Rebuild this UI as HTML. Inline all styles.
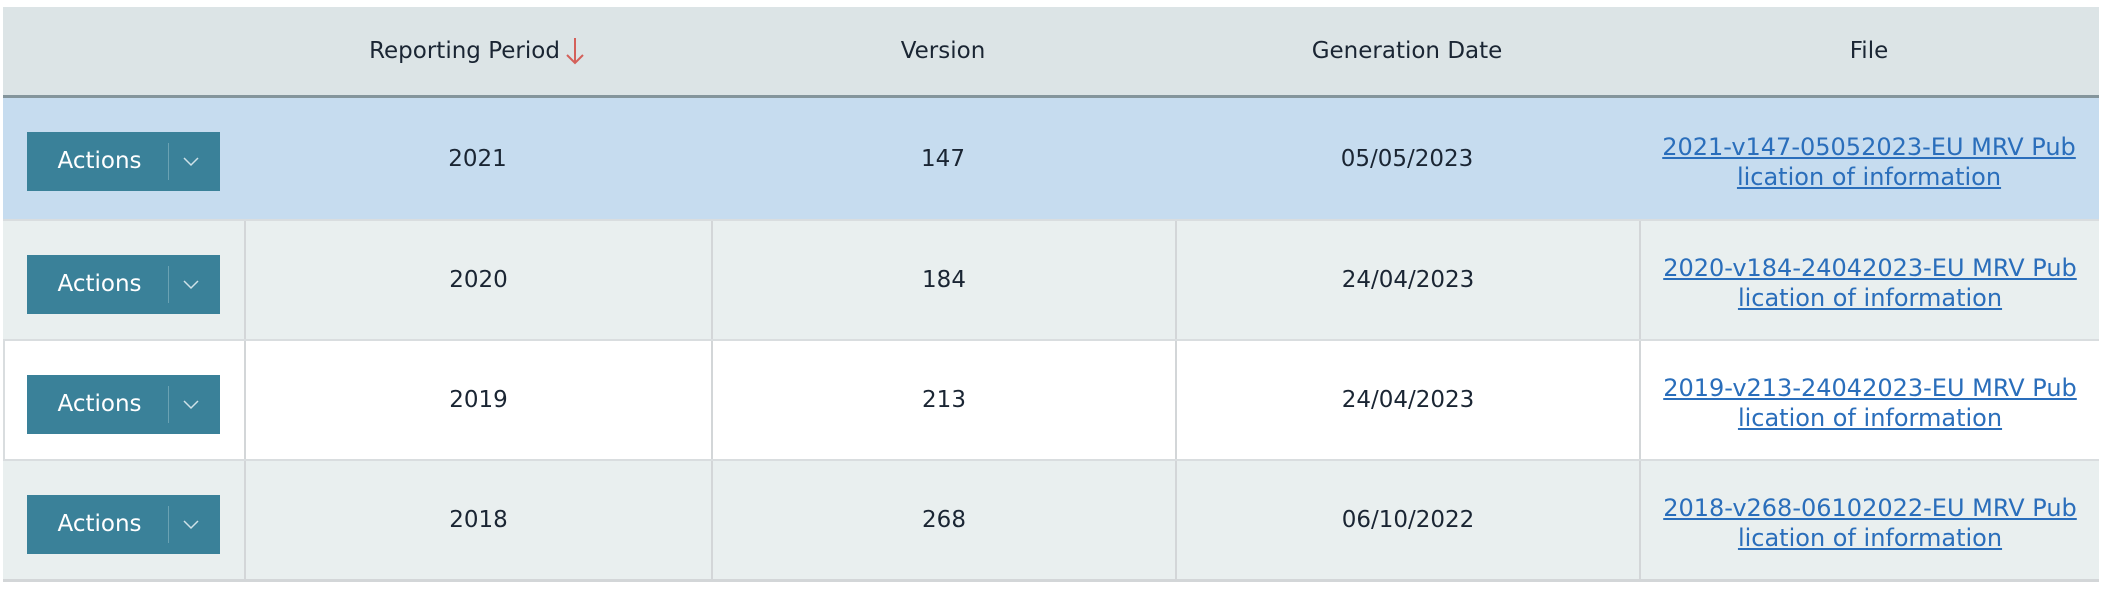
<!DOCTYPE html>
<html><head><style>
body{margin:0;width:2104px;height:596px;background:#fff;font-family:"DejaVu Sans",Verdana,sans-serif;overflow:hidden;position:relative}
.t{position:absolute;left:3px;top:7px;width:2096px}
.hd{height:88px;background:#dce4e6;border-bottom:3px solid #84959c;position:relative;color:#1a2533;font-size:23px}
.row{height:118px;position:relative;border-bottom:2px solid #d9dddf;color:#1a2533;font-size:23px}
.c{position:absolute;top:0;bottom:0;display:flex;align-items:center;justify-content:center;text-align:center}
.b{border-left:2px solid #d3d6d8}
.btn{position:absolute;left:24px;top:34px;width:193px;height:59px;background:#3a8199;color:#fff;font-size:23px}
.btn span{position:absolute;left:0;width:145px;top:0;line-height:59px;text-align:center}
.btn i{position:absolute;left:141px;top:11px;height:37px;border-left:1px solid #6aa2b3}
.btn svg{position:absolute;left:155px;top:24px}
a{color:#2a6ebb;text-decoration:underline;line-height:30px;font-size:24px;padding-top:6px;white-space:nowrap}
</style></head><body>
<div class="t">
<div class="hd">
<div class="c" style="left:241px;width:467px">Reporting Period<svg width="22" height="32" viewBox="0 0 22 32" style="margin-left:4px"><path d="M11 3V28M3 20L11 28L19 20" stroke="#d4605a" stroke-width="2" fill="none"/></svg></div>
<div class="c" style="left:708px;width:464px">Version</div>
<div class="c" style="left:1172px;width:464px">Generation Date</div>
<div class="c" style="left:1636px;width:460px">File</div>
</div>
<div class="row" style="background:#c6dcef;height:121px">
<div class="btn"><span>Actions</span><i></i><svg width="18" height="12"><path d="M2 2L9 9L16 2" stroke="#cfe2e8" stroke-width="1.5" fill="none"/></svg></div>
<div class="c" style="left:241px;width:467px">2021</div>
<div class="c" style="left:708px;width:464px">147</div>
<div class="c" style="left:1172px;width:464px">05/05/2023</div>
<div class="c" style="left:1636px;width:460px"><a>2021-v147-05052023-EU MRV Pub<br>lication of information</a></div>
</div>
<div class="row" style="background:#e9efef">
<div class="btn"><span>Actions</span><i></i><svg width="18" height="12"><path d="M2 2L9 9L16 2" stroke="#cfe2e8" stroke-width="1.5" fill="none"/></svg></div>
<div class="c b" style="left:241px;width:465px">2020</div>
<div class="c b" style="left:708px;width:462px">184</div>
<div class="c b" style="left:1172px;width:462px">24/04/2023</div>
<div class="c b" style="left:1636px;width:458px"><a>2020-v184-24042023-EU MRV Pub<br>lication of information</a></div>
</div>
<div class="row" style="background:#fff;border-left:2px solid #d9dddf">
<div class="btn" style="left:22px"><span>Actions</span><i></i><svg width="18" height="12"><path d="M2 2L9 9L16 2" stroke="#cfe2e8" stroke-width="1.5" fill="none"/></svg></div>
<div class="c b" style="left:239px;width:465px">2019</div>
<div class="c b" style="left:706px;width:462px">213</div>
<div class="c b" style="left:1170px;width:462px">24/04/2023</div>
<div class="c b" style="left:1634px;width:458px"><a>2019-v213-24042023-EU MRV Pub<br>lication of information</a></div>
</div>
<div class="row" style="background:#e9efef;border-bottom:3px solid #d3d6d8">
<div class="btn"><span>Actions</span><i></i><svg width="18" height="12"><path d="M2 2L9 9L16 2" stroke="#cfe2e8" stroke-width="1.5" fill="none"/></svg></div>
<div class="c b" style="left:241px;width:465px">2018</div>
<div class="c b" style="left:708px;width:462px">268</div>
<div class="c b" style="left:1172px;width:462px">06/10/2022</div>
<div class="c b" style="left:1636px;width:458px"><a>2018-v268-06102022-EU MRV Pub<br>lication of information</a></div>
</div>
</div>
</body></html>
